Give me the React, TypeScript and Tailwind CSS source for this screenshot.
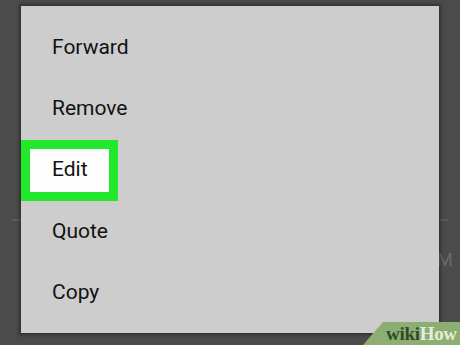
import React from 'react';

const ITEMS = ['Forward', 'Remove', 'Edit', 'Quote', 'Copy'];

const App: React.FC = () => {
    return (
        <div className="relative w-[460px] h-[345px] overflow-hidden bg-[#4b4b4b] font-['Roboto','Liberation_Sans',sans-serif]">
            {/* Background screen behind the dialog */}
            <div className="absolute left-[12px] right-[12px] top-[219px] h-[2px] bg-[#5c5c5c]"></div>
            <span className="absolute left-[437px] top-[250px] text-[18px] leading-[20px] text-[#6a6a6a]">M</span>

            {/* Dialog */}
            <div className="relative ml-[21px] mt-[6px] w-[418px] h-[327px] flex flex-col bg-[#cdcdcd] shadow-[0_0_3px_2px_rgba(0,0,0,0.35)] pt-[11px]">
                {ITEMS.map((item) =>
                    item === 'Edit' ? (
                        <div
                            key={item}
                            className="w-[97px] h-[61.25px] flex items-center border-[9px] border-[#22e82c] bg-[#fdfdfd] pl-[22px] text-[21px] text-[#121212]"
                        >
                            {item}
                        </div>
                    ) : (
                        <div key={item} className="h-[61.25px] flex items-center pl-[31px] text-[21px] text-[#121212]">
                            {item}
                        </div>
                    )
                )}
            </div>

            {/* wikiHow watermark */}
            <div className="absolute left-[363px] top-[322px] w-[110px] h-[23px] flex items-center pl-[23px] bg-[#8cae72] [clip-path:polygon(20px_0,100%_0,100%_100%,0_100%)] text-[19px] leading-[22px] font-bold font-['Liberation_Serif','DejaVu_Serif',serif] tracking-[-0.3px]">
                <span className="text-[#2f4a2c]">wiki</span>
                <span className="text-[#e4ecdc]">How</span>
            </div>
        </div>
    );
};

export default App;
